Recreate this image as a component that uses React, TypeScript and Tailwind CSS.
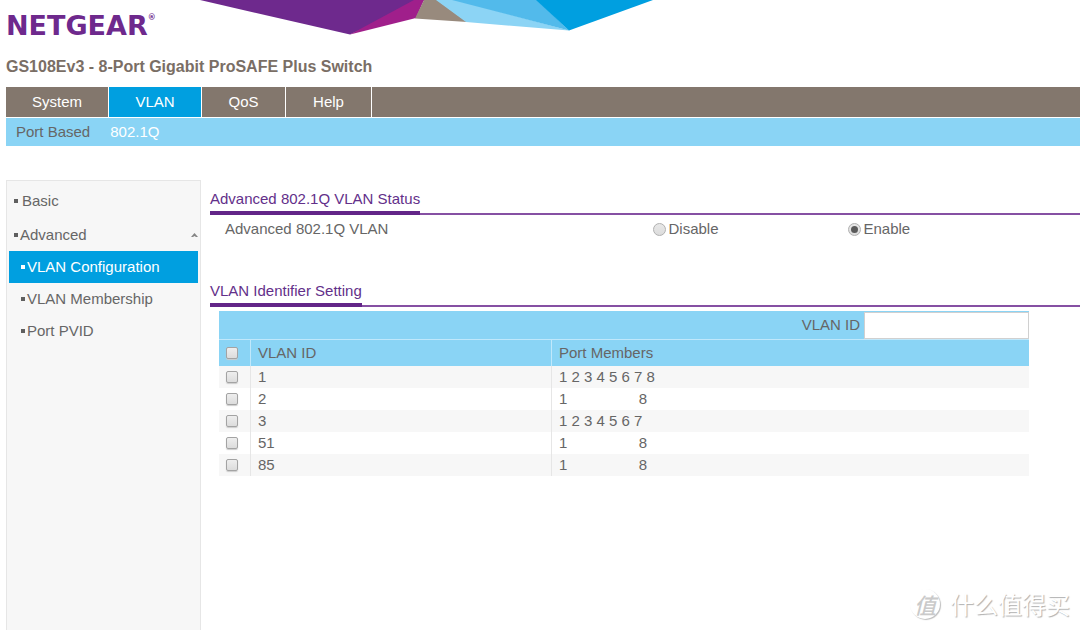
import React from "react";

const tabs = [
  { label: "System", width: "w-[103px]", active: false },
  { label: "VLAN", width: "w-[93px]", active: true },
  { label: "QoS", width: "w-[84px]", active: false },
  { label: "Help", width: "w-[86px]", active: false },
];

const subPages = [
  { label: "VLAN Configuration", active: true },
  { label: "VLAN Membership", active: false },
  { label: "Port PVID", active: false },
];

const vlans = [
  { id: "1", members: [1, 2, 3, 4, 5, 6, 7, 8] },
  { id: "2", members: [1, 8] },
  { id: "3", members: [1, 2, 3, 4, 5, 6, 7] },
  { id: "51", members: [1, 8] },
  { id: "85", members: [1, 8] },
];

const checkboxStyle =
  "block size-3 appearance-none rounded-[2px] border border-[#a3a3a3] bg-linear-to-b from-[#eeeeee] to-[#dcdcdc] shadow-[0_1px_1px_#cccccc] checked:bg-none checked:bg-[#666666]";

const radioStyle =
  "grid size-[13px] appearance-none place-items-center rounded-full border border-[#b0b0b0] bg-linear-to-b from-[#e8e8e8] to-[#dcdcdc] checked:before:size-[7px] checked:before:rounded-full checked:before:bg-[#5a5a5a]";

function Bullet({ active = false }: { active?: boolean }) {
  return <span className={active ? "size-1 shrink-0 bg-white" : "size-1 shrink-0 bg-[#5f5f5f]"} />;
}

function Banner() {
  return (
    <svg className="absolute left-[200px] top-0" width="454" height="36" viewBox="200 0 454 36" aria-hidden="true">
      <polygon points="200,0 425,0 350,34.5" fill="#6e298d" />
      <polygon points="414,0 424,0 416,18 350,34.5" fill="#a01f8b" />
      <polygon points="424,0 437,0 467,22 415,18.5" fill="#988a7d" />
      <polygon points="436,0 456,0 569,30.5 466,22" fill="#8cd4f5" />
      <polygon points="452,0 537,0 569,30.5" fill="#52baeb" />
      <polygon points="536,0 653,0 569,30.5" fill="#009fe0" />
    </svg>
  );
}

function SectionTitle({ children }: { children: string }) {
  return (
    <div className="flex border-b-2 border-[#8650a3]">
      <h2 className="-mb-0.5 border-b-4 border-[#632588] leading-6 text-[#63308a]">{children}</h2>
    </div>
  );
}

function Watermark() {
  return (
    <div className="pointer-events-none absolute bottom-2 right-2.5 flex items-center gap-2.5 font-['Noto_Sans_CJK_SC',sans-serif] text-white">
      <span className="grid size-[30px] place-items-center rounded-full text-[22px] font-medium italic leading-none text-[#cacaca] shadow-[1px_1px_1px_#bdbdbd]">
        值
      </span>
      <span className="text-2xl leading-9 [text-shadow:1px_1px_1px_#b0b0b0]">什么值得买</span>
    </div>
  );
}

export default function App() {
  return (
    <div className="relative flex min-h-screen flex-col overflow-hidden bg-white pl-1.5 font-['Liberation_Sans',Arial,sans-serif] text-[15px] leading-5 text-[#666666]">
      <header>
        <Banner />
        <div className="flex items-start pt-3 font-['DejaVu_Sans',sans-serif] font-bold text-[#6e298d]">
          <span className="text-[27px] leading-7">NETGEAR</span>
          <span className="text-[8px] leading-3">®</span>
        </div>
        <h1 className="mt-[17px] text-base font-bold leading-5 text-[#7a6e65]">
          GS108Ev3 - 8-Port Gigabit ProSAFE Plus Switch
        </h1>
        <nav className="mt-2.5 flex h-[30px] bg-[#83776d] text-white">
          {tabs.map((tab) => (
            <a
              key={tab.label}
              href="#"
              className={`flex items-center justify-center border-r border-white ${tab.width} ${tab.active ? "bg-[#009fe0]" : ""}`}
            >
              {tab.label}
            </a>
          ))}
        </nav>
        <nav className="mt-px flex h-7 items-center gap-5 bg-[#8ad4f5] px-2.5">
          <a href="#">Port Based</a>
          <a href="#" className="text-white">802.1Q</a>
        </nav>
      </header>

      <div className="mt-[34px] flex flex-1">
        <aside className="w-[195px] shrink-0 border-x border-t border-[#e6e6e6] bg-[#f7f7f7] px-0.5 pt-[9px]">
          <a href="#" className="flex h-[22px] items-center gap-1 px-[5px]">
            <Bullet />
            Basic
          </a>
          <a href="#" className="mt-3 flex h-[22px] items-center gap-0.5 pl-[5px]">
            <Bullet />
            Advanced
            <svg className="ml-auto" width="7" height="4" viewBox="0 0 7 4" aria-hidden="true">
              <path d="M0 4 L3.5 0 L7 4 L5 4 L3.5 3 L2 4 Z" fill="#858585" />
            </svg>
          </a>
          <ul className="mt-[5px]">
            {subPages.map((page) => (
              <li key={page.label}>
                <a
                  href="#"
                  className={`flex h-8 items-center gap-0.5 pl-3 ${page.active ? "bg-[#009fe0] text-white" : ""}`}
                >
                  <Bullet active={page.active} />
                  {page.label}
                </a>
              </li>
            ))}
          </ul>
        </aside>

        <main className="min-w-0 flex-1 pl-[9px] pt-[7px]">
          <section>
            <SectionTitle>Advanced 802.1Q VLAN Status</SectionTitle>
            <div role="radiogroup" aria-labelledby="status-label" className="mt-1 flex items-center pl-[15px]">
              <span id="status-label" className="w-1/2">Advanced 802.1Q VLAN</span>
              <label className="flex w-[195px] items-center gap-[3px]">
                <input type="radio" name="status" className={radioStyle} />
                Disable
              </label>
              <label className="flex items-center gap-[3px]">
                <input type="radio" name="status" defaultChecked className={radioStyle} />
                Enable
              </label>
            </div>
          </section>

          <section className="mt-10">
            <SectionTitle>VLAN Identifier Setting</SectionTitle>
            <div className="ml-[9px] mr-[51px] mt-1">
              <div className="flex h-7 items-stretch justify-end bg-[#8ad4f5]">
                <label htmlFor="vlan-id" className="flex items-center pr-1">
                  VLAN ID
                </label>
                <input
                  id="vlan-id"
                  type="text"
                  className="mt-px w-[165px] border border-[#d0d0d0] bg-white px-1 outline-none"
                />
              </div>
              <table className="w-full table-fixed border-separate border-spacing-0 text-left">
                <colgroup>
                  <col className="w-[31px]" />
                  <col className="w-[301px]" />
                  <col />
                </colgroup>
                <thead>
                  <tr className="h-[27px] bg-[#8ad4f5]">
                    <th className="border-t border-[#c0e8fb] pl-[7px]">
                      <input type="checkbox" aria-label="Select all VLANs" className={checkboxStyle} />
                    </th>
                    <th className="border-l border-t border-[#c0e8fb] pl-[7px] font-normal">VLAN ID</th>
                    <th className="border-l border-t border-[#c0e8fb] pl-[7px] font-normal">Port Members</th>
                  </tr>
                </thead>
                <tbody>
                  {vlans.map((vlan) => (
                    <tr key={vlan.id} className="h-[22px] odd:bg-[#f7f7f7]">
                      <td className="pl-[7px]">
                        <input type="checkbox" aria-label={`Select VLAN ${vlan.id}`} className={checkboxStyle} />
                      </td>
                      <td className="border-l border-[#e6e6e6] pl-[7px]">{vlan.id}</td>
                      <td className="border-l border-[#e6e6e6] pl-[7px]">
                        {vlan.members.length > 2 ? (
                          vlan.members.join(" ")
                        ) : (
                          <span className="flex w-[88px] justify-between">
                            {vlan.members.map((port) => (
                              <span key={port}>{port}</span>
                            ))}
                          </span>
                        )}
                      </td>
                    </tr>
                  ))}
                </tbody>
              </table>
            </div>
          </section>
        </main>
      </div>
      <Watermark />
    </div>
  );
}
